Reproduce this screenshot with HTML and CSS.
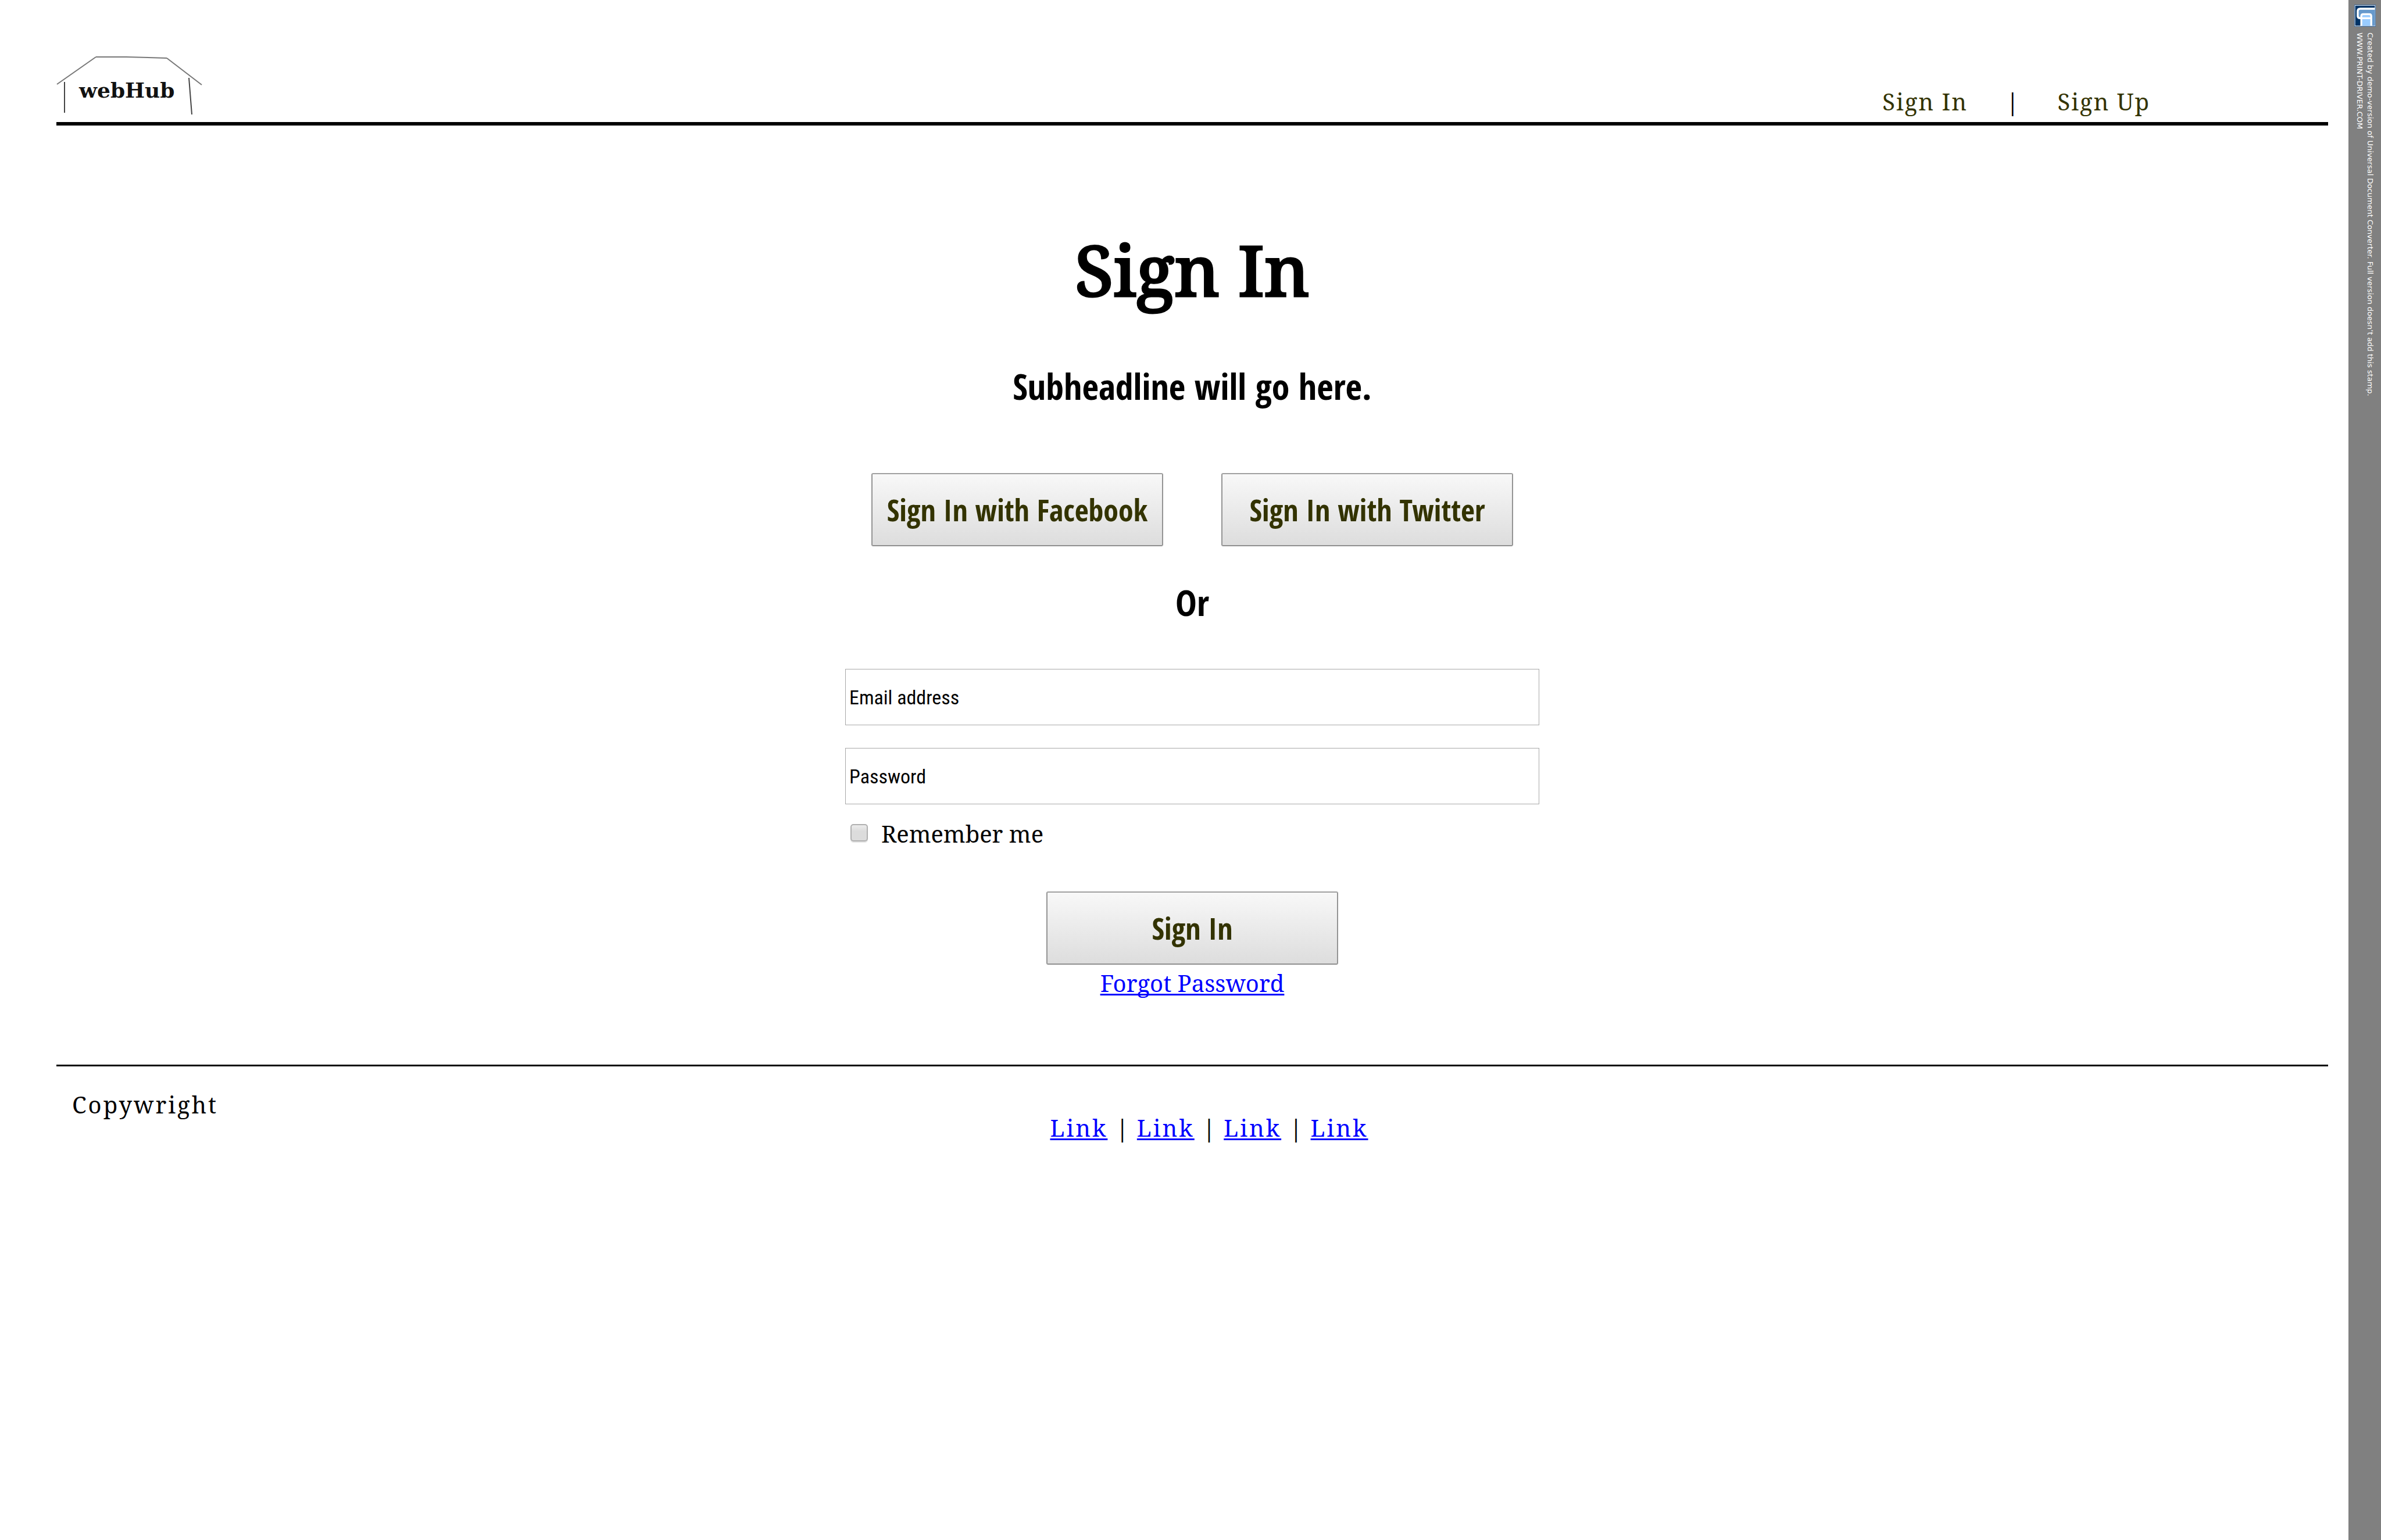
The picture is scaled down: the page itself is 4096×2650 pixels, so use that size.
FILE: index.html
```html
<!DOCTYPE html>
<html lang="en">
<head>
<meta charset="utf-8">
<title>webHub - Sign In</title>
<link rel="stylesheet" href="styles.css">
</head>
<body>
<div class="page">
  <header class="header">
    <a class="logo" href="#" aria-label="webHub">
      <svg class="logo-art" viewBox="0 0 251 102" aria-hidden="true">
        <path d="M1 49 68 2" /><path d="M68 2 120 2 190 4" /><path d="M190 4 250 50" />
        <path class="post" d="M14 45V98" /><path class="post" d="M228 38 233 101" />
        <text x="39" y="72">webHub</text>
      </svg>
    </a>
    <nav class="top-nav">
      <a href="#">Sign In</a>
      <span class="divider">|</span>
      <a href="#">Sign Up</a>
    </nav>
  </header>

  <main class="main">
    <h1>Sign In</h1>
    <h2 class="subheadline">Subheadline will go here.</h2>
    <div class="social">
      <button class="button" type="button">Sign In with Facebook</button>
      <button class="button" type="button">Sign In with Twitter</button>
    </div>
    <h2 class="or">Or</h2>
    <form class="form">
      <input class="field" type="text" placeholder="Email address" aria-label="Email address">
      <input class="field" type="password" placeholder="Password" aria-label="Password">
      <label class="remember"><input class="check" type="checkbox">Remember me</label>
      <button class="button submit" type="button">Sign In</button>
    </form>
    <a class="forgot" href="#">Forgot Password</a>
  </main>

  <footer class="footer">
    <p class="copy">Copywright</p>
    <nav class="footer-nav">
      <a href="#">Link</a><span class="divider">|</span><a href="#">Link</a><span class="divider">|</span><a href="#">Link</a><span class="divider">|</span><a href="#">Link</a>
    </nav>
  </footer>
</div>

<aside class="stamp">
  <svg class="stamp-icon" viewBox="0 0 138 140" aria-hidden="true">
    <rect width="138" height="140" fill="#3366a0"/>
    <rect x="3" y="3" width="132" height="134" fill="#fff"/>
    <rect x="6" y="6" width="126" height="128" fill="#036"/>
    <path d="M132 25H38Q22 25 22 41V72Q22 86 38 86H46V134H132Z" fill="#69c"/>
    <path d="M132 25H38Q22 25 22 41V72Q22 86 38 86" fill="none" stroke="#fff" stroke-width="13"/>
    <path d="M45 134V74Q45 60 58 60H96Q109 60 109 74V134" fill="#9cf" stroke="#fff" stroke-width="12"/>
    <path d="M36 86H109" stroke="#fff" stroke-width="12"/>
  </svg>
  <p class="stamp-text">Created by demo-version of Universal Document Converter. Full version doesn’t add this stamp.<br>WWW.PRINT-DRIVER.COM</p>
</aside>
</body>
</html>
```
FILE: styles.css
```css
:root {
  --serif: "Noto Serif", "DejaVu Serif Condensed", "Liberation Serif", serif;
  --sans: "Open Sans Condensed", "Roboto Condensed", "Open Sans", sans-serif;
  --sans-light: "Roboto Condensed", "Noto Sans CJK SC", sans-serif;
  --olive: #330;
}

* { box-sizing: border-box; }

body {
  margin: 0;
  min-height: 100vh;
  display: grid;
  grid-template-columns: 1fr 56px;
  background: #fff;
  color: #000;
  font: 40px/40px var(--serif);
}

h1, h2, p { margin: 0; }

.page { padding: 96px 35px 0 97px; }

.header {
  display: flex;
  justify-content: space-between;
  align-items: flex-end;
  border-bottom: 6px solid #000;
}

.logo { display: block; margin-bottom: 12px; }
.logo-art { display: block; width: 251px; height: 102px; fill: none; stroke: #777; stroke-width: 2; }
.logo-art .post { stroke: #444; }
.logo-art text { fill: #111; stroke: none; font: bold 36px "DejaVu Serif", serif; }

.top-nav {
  display: flex;
  gap: 66px;
  padding: 0 306px 15px 0;
  letter-spacing: 2px;
}
.top-nav a { color: var(--olive); text-decoration: none; }
.divider { letter-spacing: 0; font-weight: 500; }

.main {
  display: flex;
  flex-direction: column;
  align-items: center;
  padding: 168px 0 120px;
}

h1 { font-size: 120px; line-height: 160px; font-weight: 500; -webkit-text-stroke: 3px #000; }
h2 { font: 600 62px/80px var(--sans); }
.subheadline { margin-top: 80px; }
.or { margin-top: 56px; }

.social { display: flex; gap: 100px; margin-top: 110px; }

.button {
  width: 502px;
  height: 126px;
  padding: 0;
  border: 2px solid;
  border-color: #a0a0a0 #949494 #8f8f8f;
  border-radius: 3px;
  background: linear-gradient(#f8f8f8, #ddd);
  color: var(--olive);
  font: 600 52px/80px var(--sans);
}

.form {
  display: flex;
  flex-direction: column;
  width: 1194px;
  margin-top: 75px;
}
.field {
  height: 97px;
  margin-bottom: 39px;
  padding: 0 6px;
  border: 1px solid #a9a9a9;
  background: #fff;
  font: 34px/40px var(--sans-light);
}
.field::placeholder { color: #000; opacity: 1; }

.remember { display: flex; gap: 23px; align-self: flex-start; margin-left: 9px; margin-top: -8px; }
.check {
  appearance: none;
  width: 30px;
  height: 30px;
  margin: 3px 0 0;
  border: 2px solid #b0b0b0;
  border-radius: 5px;
  background: linear-gradient(#ececec, #dcdcdc 40%);
  box-shadow: 0 2px 1px #e4e4e4;
}
.submit { align-self: center; margin-top: 79px; }

a { color: #00f; text-decoration-skip-ink: none; text-decoration-thickness: 3px; text-underline-offset: 3px; }
.forgot { margin-top: 12px; }

.footer { border-top: 3px solid #000; padding: 46px 27px 0; }
.copy { letter-spacing: 3px; }
.footer-nav {
  display: flex;
  justify-content: center;
  gap: 14px;
  padding-left: 58px;
}
.footer-nav a { letter-spacing: 3px; }

.stamp {
  display: flex;
  flex-direction: column;
  align-items: center;
  gap: 10px;
  padding-top: 8px;
  background: #808080;
}
.stamp-icon { width: 37px; height: 38px; }
.stamp-text {
  writing-mode: vertical-rl;
  white-space: nowrap;
  color: #fff;
  font: 13px/18px "DejaVu Sans", sans-serif;
}
```
